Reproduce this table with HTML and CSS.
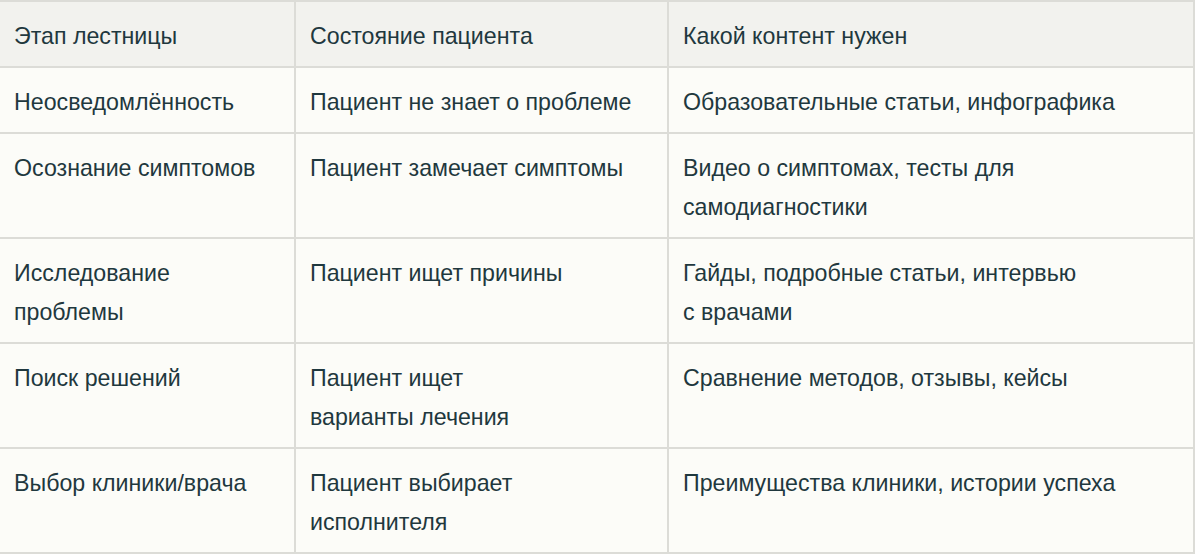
FILE: index.html
```html
<!DOCTYPE html>
<html lang="ru">
<head>
<meta charset="utf-8">
<title>Лестница Ханта</title>
<link rel="stylesheet" href="styles.css">
</head>
<body>
<div class="table">
  <div class="row head">
    <div class="cell">Этап лестницы</div>
    <div class="cell">Состояние пациента</div>
    <div class="cell">Какой контент нужен</div>
  </div>
  <div class="row">
    <div class="cell">Неосведомлённость</div>
    <div class="cell">Пациент не знает о проблеме</div>
    <div class="cell">Образовательные статьи, инфографика</div>
  </div>
  <div class="row">
    <div class="cell">Осознание симптомов</div>
    <div class="cell">Пациент замечает симптомы</div>
    <div class="cell">Видео о симптомах, тесты для<br>самодиагностики</div>
  </div>
  <div class="row">
    <div class="cell">Исследование<br>проблемы</div>
    <div class="cell">Пациент ищет причины</div>
    <div class="cell">Гайды, подробные статьи, интервью<br>с врачами</div>
  </div>
  <div class="row">
    <div class="cell">Поиск решений</div>
    <div class="cell">Пациент ищет<br>варианты лечения</div>
    <div class="cell">Сравнение методов, отзывы, кейсы</div>
  </div>
  <div class="row">
    <div class="cell">Выбор клиники/врача</div>
    <div class="cell">Пациент выбирает<br>исполнителя</div>
    <div class="cell">Преимущества клиники, истории успеха</div>
  </div>
</div>
</body>
</html>
```

FILE: styles.css
```css
html, body {
  margin: 0;
  padding: 0;
  background: #ffffff;
}

body {
  font-family: "Liberation Sans", Arial, sans-serif;
  color: #1f383e;
}

.table {
  display: grid;
  grid-template-columns: 296px 373px 526px;
  border-top: 2px solid #dcdcd7;
  width: 1195px;
}

.row {
  display: contents;
}

.cell {
  box-sizing: border-box;
  background: #fcfcf8;
  border-right: 2px solid #dcdcd7;
  border-bottom: 2px solid #dcdcd7;
  padding: 14.5px 14px 10.5px 14px;
  font-size: 23.2px;
  line-height: 39px;
}

.head .cell {
  background: #f2f2ee;
}
```
